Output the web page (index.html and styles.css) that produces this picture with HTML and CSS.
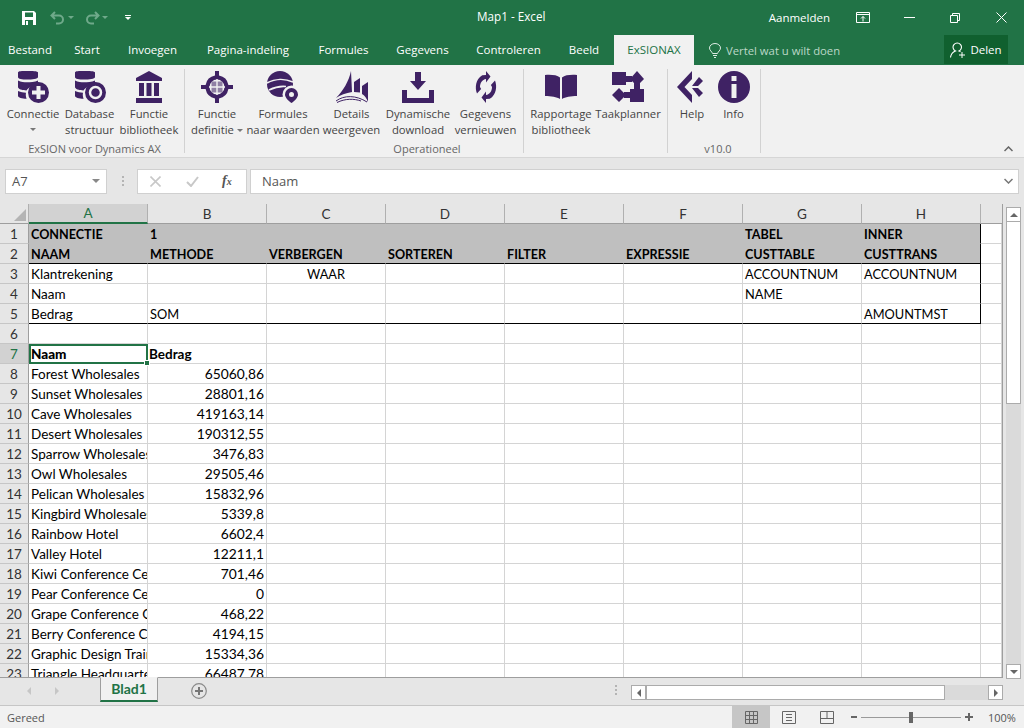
FILE: index.html
```html
<!DOCTYPE html>
<html lang="nl">
  <head>
    <meta charset="UTF-8" />
    <title>Map1 - Excel</title>
    <link rel="stylesheet" href="styles.css">
  </head>

  <body>
    <div class="app">
      <div class="titlebar">
        <div class="qat">
          <svg class="qat-save" width="14" height="14" viewBox="0 0 14 14"><path fill="#fff" d="M0 0h12l2 2v12H0z"/><path fill="#217346" d="M3 1.500h8v4.500H3zM3 9h8v5H3z"/><path fill="#fff" d="M4 10h2v4H4z"/></svg>
          <svg class="qat-off" width="16" height="14" viewBox="0 0 16 14"><path fill="none" stroke="#6fa98a" stroke-width="2" d="M5 1L1.500 4.500 5 8M2 4.500h7a4 4 0 0 1 0 8H6"/></svg>
          <span class="caret caret-off"></span>
          <svg class="qat-off qat-redo" width="16" height="14" viewBox="0 0 16 14"><path fill="none" stroke="#6fa98a" stroke-width="2" d="M11 1l3.500 3.500L11 8M14 4.500H7a4 4 0 0 0 0 8h3"/></svg>
          <span class="caret caret-off"></span>
          <span class="qat-more"><i></i><span class="caret"></span></span>
        </div>
        <div class="doc-title">Map1 - Excel</div>
        <div class="winctl">
          <span class="signin">Aanmelden</span>
          <svg class="win-display" width="14" height="11" viewBox="0 0 14 11"><path fill="none" stroke="#fff" d="M.5.500h13v10H.5zM.5 2.500h13M7 9.500V4.500M5 6.500l2-2 2 2"/></svg>
          <svg class="win-min" width="11" height="1" viewBox="0 0 11 1"><path fill="#fff" d="M0 0h11v1H0z"/></svg>
          <svg class="win-restore" width="10" height="10" viewBox="0 0 10 10"><path fill="none" stroke="#fff" d="M.5 2.500h7v7h-7zM2.500 2.500v-2h7v7h-2"/></svg>
          <svg class="win-close" width="11" height="11" viewBox="0 0 11 11"><path fill="none" stroke="#fff" d="M.5.500l10 10M10.500.500l-10 10"/></svg>
        </div>
      </div>

      <div class="tabs">
        <a class="tab t-bestand">Bestand</a>
        <a class="tab t-start">Start</a>
        <a class="tab t-invoegen">Invoegen</a>
        <a class="tab t-pagina">Pagina-indeling</a>
        <a class="tab t-formules">Formules</a>
        <a class="tab t-gegevens">Gegevens</a>
        <a class="tab t-controleren">Controleren</a>
        <a class="tab t-beeld">Beeld</a>
        <a class="tab tab-active">ExSIONAX</a>
        <div class="tell">
          <svg width="12" height="15" viewBox="0 0 12 15"><path fill="none" stroke="#dcebe3" d="M3.500 10.500C3 8.500.5 7.500.5 5a5.500 4.500 0 0 1 11 0c0 2.500-2.500 3.500-3 5.500zM4 12.500h4M5 14.500h2"/></svg>
          <span>Vertel wat u wilt doen</span>
        </div>
        <div class="share">
          <svg width="16" height="16" viewBox="0 0 16 16"><path fill="none" stroke="#fff" stroke-width="1.100" d="M.5 15.500c.5-4 2.500-5.500 5-6.500a4.200 4.200 0 1 1 3.500 0c.5.200 1 .4 1.500.8"/><path fill="none" stroke="#fff" d="M12 10v6M9 13h6"/></svg>
          <span>Delen</span>
        </div>
      </div>

      <div class="ribbon">
        <div class="group group-conn">
          <div class="buttons">
            <div class="rbtn">
              <svg class="ico" viewBox="0 0 32 32"><path d="M1 1.500C1 0 5 0 10 0s11 0 11 1.500V6C21 8 15 8.500 10 8.500S1 8 1 6zM1 9.500c3 1.500 6 1.800 9 1.800s8-.3 11-1.800v3.200c-5 1-10 4-11.500 6.800C5 19.300 1 18 1 16zM1 20c3 1.200 5 1.600 8 1.700-.4 2-.2 4 .6 6-4.600 0-8.600-1-8.600-3z"/><circle cx="21.500" cy="21.500" r="10.500"/><path fill="#f1f1f1" d="M19.500 15h4v4.500H28v4h-4.500V28h-4v-4.500H15v-4h4.500z"/></svg>
              <span>Connectie</span>
              <span class="caret caret-dark caret-block"></span>
            </div>
            <div class="rbtn">
              <svg class="ico" viewBox="0 0 32 32"><path d="M1 1.500C1 0 5 0 10 0s11 0 11 1.500V6C21 8 15 8.500 10 8.500S1 8 1 6zM1 9.500c3 1.500 6 1.800 9 1.800s8-.3 11-1.800v3.200c-5 1-10 4-11.500 6.800C5 19.300 1 18 1 16zM1 20c3 1.200 5 1.600 8 1.700-.4 2-.2 4 .6 6-4.600 0-8.600-1-8.600-3z"/><circle cx="21.500" cy="21.500" r="10.500"/><circle cx="21.500" cy="21.500" r="5.500" fill="none" stroke="#f1f1f1" stroke-width="2.500"/></svg>
              <span>Database<br>structuur</span>
            </div>
            <div class="rbtn">
              <svg class="ico" viewBox="0 0 32 32"><path d="M16 0l13 7v3H3V7zM3 27h26v5H3zM6 12h5v13H6zM13.500 12h5v13h-5zM21 12h5v13h-5z"/></svg>
              <span>Functie<br>bibliotheek</span>
            </div>
          </div>
          <div class="glabel">ExSION voor Dynamics AX</div>
        </div>

        <div class="group group-oper">
          <div class="buttons">
            <div class="rbtn">
              <svg class="ico" viewBox="0 0 32 32"><path fill-rule="evenodd" d="M14 0h4v4.600A11.800 11.800 0 0 1 27.400 14H32v4h-4.600A11.800 11.800 0 0 1 18 27.400V32h-4v-4.600A11.800 11.800 0 0 1 4.600 18H0v-4h4.600A11.800 11.800 0 0 1 14 4.600zM16 8.500a7.500 7.500 0 1 0 0 15 7.500 7.500 0 0 0 0-15z"/><path opacity=".55" d="M10.500 10.500h11v11h-11z"/><path fill="#f1f1f1" d="M15.300 8h1.400v16h-1.400zM8 15.300h16v1.400H8z"/></svg>
              <span>Functie<br>definitie<i class="caret caret-dark caret-inline"></i></span>
            </div>
            <div class="rbtn">
              <svg class="ico" viewBox="0 0 32 32"><circle cx="13" cy="13" r="13"/><path fill="none" stroke="#f1f1f1" stroke-width="1.600" d="M0 12C8 7.500 18 7.500 26 11M2 19c6-3 12-4 17-3.500"/><circle cx="24.500" cy="23.500" r="9" fill="#f1f1f1"/><path fill-rule="evenodd" d="M24.500 17a6.500 6.500 0 0 1 6.500 6.500c0 3-3.500 6.500-6.500 8.500-3-2-6.500-5.500-6.500-8.500a6.500 6.500 0 0 1 6.500-6.500zm0 4a2.500 2.500 0 1 0 0 5 2.500 2.500 0 0 0 0-5z"/></svg>
              <span>Formules<br>naar waarden</span>
            </div>
            <div class="rbtn">
              <svg class="ico" viewBox="0 0 32 32"><path d="M15 0l1 21C10 22 4 24 0 27 7 20 13 10 15 0zM18 11l6-4v14.500l-6-.6zM26 15l6-4v20c-1.500-4-3.500-6.500-6-8z"/><path fill="none" stroke="#3f2264" d="M0 30c8-6 20-6 31 1M1 31.500c8-4 17-4 24-1.500"/></svg>
              <span>Details<br>weergeven</span>
            </div>
            <div class="rbtn">
              <svg class="ico" viewBox="0 0 32 32"><path d="M13 1h6v9h5l-8 9-8-9h5zM0 19h5v8h22v-8h5v13H0z"/></svg>
              <span>Dynamische<br>download</span>
            </div>
            <div class="rbtn">
              <svg class="ico" viewBox="0 0 32 32"><g transform="translate(4 0) scale(.75 1)"><path d="M16 0l6 5.500-6 6V8C11 8.500 8 12 8 16l1.500 2L4 22.500C1 17 2 8 11 4.200L16 4zM16 32l-6-5.500 6-6V24c5-.5 8-4 8-8l-1.500-2L28 9.500C31 15 30 24 21 27.800L16 28z"/></g></svg>
              <span>Gegevens<br>vernieuwen</span>
            </div>
            <div class="sep"></div>
            <div class="rbtn">
              <svg class="ico" viewBox="0 0 32 32"><path d="M0 4c6-.5 12 0 15 2.500V28C12 26 6 25 0 25zM32 4c-6-.5-12 0-15 2.500V28c3-2 9-3 15-3z"/></svg>
              <span>Rapportage<br>bibliotheek</span>
            </div>
            <div class="rbtn">
              <svg class="ico" viewBox="0 0 32 32"><path d="M0 1h14v13H0zM14 5h6v6h-6zM25 0l7 8-7 7-7-7zM18 18h14v13H18zM22 12h6v8h-6zM7 17l7 7-7 7-7-7zM12 21h8v6h-8z"/></svg>
              <span>Taakplanner</span>
            </div>
          </div>
          <div class="glabel">Operationeel</div>
        </div>

        <div class="group group-info">
          <div class="buttons">
            <div class="rbtn">
              <svg class="ico" viewBox="0 0 32 32"><path d="M16 0v8L8.500 16l7.500 8v8L1 16zM23 6l4 4-5 5h-6zM16 17h6l5 5-4 4z"/></svg>
              <span>Help</span>
            </div>
            <div class="rbtn">
              <svg class="ico" viewBox="0 0 32 32"><path fill-rule="evenodd" d="M16 0a16 16 0 1 1 0 32 16 16 0 0 1 0-32zM13.500 5v5h5V5zm0 8v14h5V13z"/></svg>
              <span>Info</span>
            </div>
          </div>
          <div class="glabel">v10.0</div>
        </div>

        <svg class="collapse" width="9" height="6" viewBox="0 0 9 6"><path fill="none" stroke="#666" stroke-width="1.500" d="M.5 5l4-4 4 4"/></svg>
      </div>

      <div class="fbar">
        <div class="namebox"><span>A7</span><span class="caret caret-grey"></span></div>
        <div class="dots"><i></i><i></i><i></i></div>
        <div class="fbtns">
          <svg width="11" height="11" viewBox="0 0 11 11"><path fill="none" stroke="#c8c8c8" stroke-width="1.600" d="M.5.500l10 10M10.500.500l-10 10"/></svg>
          <svg class="fcheck" width="13" height="11" viewBox="0 0 13 11"><path fill="none" stroke="#c8c8c8" stroke-width="2" d="M1 6l4 4 7-9"/></svg>
          <span class="fx">f<small>x</small></span>
        </div>
        <div class="finput">
          <span>Naam</span>
          <svg width="9" height="6" viewBox="0 0 9 6"><path fill="none" stroke="#777" stroke-width="1.500" d="M.5 1l4 4 4-4"/></svg>
        </div>
      </div>

      <div class="sheetarea">
        <div class="gridwrap">
          <table class="sheet">
            <colgroup>
              <col class="c-head"><col class="c-col"><col class="c-col"><col class="c-col"><col class="c-col"><col class="c-col"><col class="c-col"><col class="c-col"><col class="c-col"><col>
            </colgroup>
            <thead>
              <tr>
                <th class="corner"><span class="corner-tri"></span></th>
                <th class="on">A</th><th>B</th><th>C</th><th>D</th><th>E</th><th>F</th><th>G</th><th>H</th><th class="blank"></th>
              </tr>
            </thead>
            <tbody>
              <tr class="hd"><th>1</th><td>CONNECTIE</td><td>1</td><td></td><td></td><td></td><td></td><td>TABEL</td><td class="edge">INNER</td><td class="plain"></td></tr>
              <tr class="hd hd-last"><th>2</th><td>NAAM</td><td>METHODE</td><td>VERBERGEN</td><td>SORTEREN</td><td>FILTER</td><td>EXPRESSIE</td><td>CUSTTABLE</td><td class="edge">CUSTTRANS</td><td class="plain"></td></tr>
              <tr><th>3</th><td>Klantrekening</td><td></td><td class="mid caps">WAAR</td><td></td><td></td><td></td><td class="caps">ACCOUNTNUM</td><td class="edge caps">ACCOUNTNUM</td><td></td></tr>
              <tr><th>4</th><td>Naam</td><td></td><td></td><td></td><td></td><td></td><td class="caps">NAME</td><td class="edge"></td><td></td></tr>
              <tr class="box-end"><th>5</th><td>Bedrag</td><td class="caps">SOM</td><td></td><td></td><td></td><td></td><td></td><td class="edge caps">AMOUNTMST</td><td></td></tr>
              <tr><th>6</th><td></td><td></td><td></td><td></td><td></td><td></td><td></td><td></td><td></td></tr>
              <tr class="strong"><th class="on-row">7</th><td class="selected"><b>Naam</b><i class="handle"></i></td><td class="tight">Bedrag</td><td></td><td></td><td></td><td></td><td></td><td></td><td></td></tr>
              <tr><th>8</th><td>Forest Wholesales</td><td class="num">65060,86</td><td></td><td></td><td></td><td></td><td></td><td></td><td></td></tr>
              <tr><th>9</th><td>Sunset Wholesales</td><td class="num">28801,16</td><td></td><td></td><td></td><td></td><td></td><td></td><td></td></tr>
              <tr><th>10</th><td>Cave Wholesales</td><td class="num">419163,14</td><td></td><td></td><td></td><td></td><td></td><td></td><td></td></tr>
              <tr><th>11</th><td>Desert Wholesales</td><td class="num">190312,55</td><td></td><td></td><td></td><td></td><td></td><td></td><td></td></tr>
              <tr><th>12</th><td>Sparrow Wholesales</td><td class="num">3476,83</td><td></td><td></td><td></td><td></td><td></td><td></td><td></td></tr>
              <tr><th>13</th><td>Owl Wholesales</td><td class="num">29505,46</td><td></td><td></td><td></td><td></td><td></td><td></td><td></td></tr>
              <tr><th>14</th><td>Pelican Wholesales</td><td class="num">15832,96</td><td></td><td></td><td></td><td></td><td></td><td></td><td></td></tr>
              <tr><th>15</th><td>Kingbird Wholesales</td><td class="num">5339,8</td><td></td><td></td><td></td><td></td><td></td><td></td><td></td></tr>
              <tr><th>16</th><td>Rainbow Hotel</td><td class="num">6602,4</td><td></td><td></td><td></td><td></td><td></td><td></td><td></td></tr>
              <tr><th>17</th><td>Valley Hotel</td><td class="num">12211,1</td><td></td><td></td><td></td><td></td><td></td><td></td><td></td></tr>
              <tr><th>18</th><td>Kiwi Conference Center</td><td class="num">701,46</td><td></td><td></td><td></td><td></td><td></td><td></td><td></td></tr>
              <tr><th>19</th><td>Pear Conference Center</td><td class="num">0</td><td></td><td></td><td></td><td></td><td></td><td></td><td></td></tr>
              <tr><th>20</th><td>Grape Conference Center</td><td class="num">468,22</td><td></td><td></td><td></td><td></td><td></td><td></td><td></td></tr>
              <tr><th>21</th><td>Berry Conference Center</td><td class="num">4194,15</td><td></td><td></td><td></td><td></td><td></td><td></td><td></td></tr>
              <tr><th>22</th><td>Graphic Design Training</td><td class="num">15334,36</td><td></td><td></td><td></td><td></td><td></td><td></td><td></td></tr>
              <tr><th>23</th><td>Triangle Headquarters</td><td class="num">66487,78</td><td></td><td></td><td></td><td></td><td></td><td></td><td></td></tr>
            </tbody>
          </table>
        </div>
        <div class="vscroll">
          <div class="sbtn"><span class="tri tri-up"></span></div>
          <div class="vthumb"></div>
          <div class="sbtn sbtn-down"><span class="tri tri-down"></span></div>
        </div>
      </div>

      <div class="sheetbar">
        <div class="tabnav"><span class="tri tri-left tri-pale"></span><span class="tri tri-right tri-pale"></span></div>
        <div class="sheettab">Blad1</div>
        <svg class="addsheet" width="16" height="16" viewBox="0 0 16 16"><circle cx="8" cy="8" r="7.300" fill="none" stroke="#8a8a8a" stroke-width="1.200"/><path stroke="#777" stroke-width="2" d="M8 4v8M4 8h8"/></svg>
        <div class="dots dots-bar"><i></i><i></i><i></i></div>
        <div class="hscroll">
          <div class="hbtn"><span class="tri tri-left"></span></div>
          <div class="hthumb"></div>
          <div class="hbtn hbtn-right"><span class="tri tri-right"></span></div>
        </div>
      </div>

      <div class="statusbar">
        <span class="ready">Gereed</span>
        <div class="views">
          <div class="view view-on"><svg width="13" height="13" viewBox="0 0 13 13"><path fill="none" stroke="#666" d="M.5.500h12v12H.5zM4.500.500v12M8.500.500v12M.5 4.500h12M.5 8.500h12"/></svg></div>
          <div class="view"><svg width="14" height="13" viewBox="0 0 14 13"><path fill="none" stroke="#666" d="M.5.500h13v12H.5zM4 3.500h6M4 6.500h6M4 9.500h6"/></svg></div>
          <div class="view"><svg width="14" height="13" viewBox="0 0 14 13"><path fill="none" stroke="#666" d="M.5 12.500V.5h13v12zM.5 7.500h13M7 .5v7"/></svg></div>
        </div>
        <div class="zoom">
          <span class="zoom-minus"></span>
          <div class="zoom-track"><span class="zoom-knob"></span></div>
          <span class="zoom-plus"></span>
          <span class="zoom-val">100%</span>
        </div>
      </div>
    </div>
  </body>
</html>
```

FILE: styles.css
```css
* {
  padding: 0;
  margin: 0;
  box-sizing: border-box;
}

html,
body {
  width: 100%;
  height: 100%;
  overflow: hidden;
}

body {
  font-family: "Open Sans", "Noto Sans", sans-serif;
  font-size: 11.5px;
  color: #444;
}

.app {
  display: flex;
  flex-direction: column;
  width: 1024px;
  height: 728px;
  background-color: #e6e6e6;
}

/* shared little triangles */
.caret {
  display: inline-block;
  width: 0;
  height: 0;
  border-left: 3px solid transparent;
  border-right: 3px solid transparent;
  border-top: 3px solid #fff;
}

.caret-off {
  border-top-color: #6fa98a;
  margin-left: 2px;
}

.caret-dark {
  border-top-color: #777;
}

.caret-grey {
  border-left-width: 4px;
  border-right-width: 4px;
  border-top: 4px solid #888;
}

.caret-block {
  display: block;
  margin: 6px auto 0;
}

.caret-inline {
  margin-left: 3px;
  vertical-align: 2px;
}

.tri {
  display: block;
  width: 0;
  height: 0;
}

.tri-up {
  border-left: 4px solid transparent;
  border-right: 4px solid transparent;
  border-bottom: 4px solid #666;
}

.tri-down {
  border-left: 4px solid transparent;
  border-right: 4px solid transparent;
  border-top: 4px solid #666;
}

.tri-left {
  border-top: 4px solid transparent;
  border-bottom: 4px solid transparent;
  border-right: 4px solid #666;
}

.tri-right {
  border-top: 4px solid transparent;
  border-bottom: 4px solid transparent;
  border-left: 4px solid #666;
}

.tri-pale {
  border-left-color: #c6c6c6;
  border-right-color: #c6c6c6;
}

/* title bar */
.titlebar {
  position: relative;
  display: flex;
  justify-content: space-between;
  align-items: center;
  height: 35px;
  background-color: #217346;
  color: #fff;
}

.qat {
  display: flex;
  align-items: center;
  padding: 0 0 0 22px;
}

.qat-off {
  margin-left: 14px;
}

.qat-redo {
  margin-left: 10px;
}

.qat-more {
  display: flex;
  flex-direction: column;
  align-items: center;
  margin-left: 17px;
  gap: 1px;
}

.qat-more i {
  display: block;
  width: 6px;
  height: 1px;
  background-color: #fff;
}

.doc-title {
  position: absolute;
  left: 477px;
  top: 8px;
  font-size: 11.7px;
  color: #fff;
}

.winctl {
  display: flex;
  align-items: center;
  padding-right: 17px;
}

.signin {
  font-size: 11.5px;
  margin-right: 26px;
}

.win-min {
  margin-left: 34px;
}

.win-restore {
  margin-left: 35px;
}

.win-close {
  margin-left: 36px;
}

/* tab strip */
.tabs {
  display: flex;
  align-items: stretch;
  height: 30px;
  background-color: #217346;
  color: #fff;
  font-size: 11.5px;
}

.tab {
  display: block;
  padding-top: 7px;
  text-align: center;
}

.t-bestand { width: 60px; }
.t-start { width: 54px; }
.t-invoegen { width: 77px; }
.t-pagina { width: 114px; }
.t-formules { width: 77px; }
.t-gegevens { width: 81px; }
.t-controleren { width: 91px; }
.t-beeld { width: 60px; }

.tab-active {
  width: 80px;
  background-color: #f1f1f1;
  color: #217346;
}

.tell {
  display: flex;
  align-items: center;
  gap: 5px;
  margin-left: 15px;
  color: #bcd8c8;
  font-size: 11.3px;
  width: 235px;
}

.share {
  display: flex;
  align-items: center;
  justify-content: center;
  gap: 4px;
  width: 64px;
  height: 29px;
  background-color: #10602f;
}

/* ribbon */
.ribbon {
  position: relative;
  display: flex;
  height: 93px;
  background-color: #f1f1f1;
  border-bottom: 1px solid #d6d6d6;
  font-size: 11.3px;
  line-height: 16px;
  color: #444;
}

.group {
  position: relative;
  display: flex;
  flex-direction: column;
  height: 84px;
  margin-top: 4px;
  border-right: 1px solid #d2d2d2;
}

.group-conn { width: 185px; padding-left: 5px; }
.group-oper { width: 483px; padding-left: 2px; }
.group-info { width: 93px; padding-left: 8px; }

.buttons {
  display: flex;
  flex: none;
  height: 72px;
}

.group-conn .rbtn:nth-child(1) { width: 56px; }
.group-conn .rbtn:nth-child(2) { width: 57px; }
.group-conn .rbtn:nth-child(3) { width: 62px; }

.group-oper .rbtn:nth-child(1) { width: 60px; }
.group-oper .rbtn:nth-child(2) { width: 72px; }
.group-oper .rbtn:nth-child(3) { width: 65px; }
.group-oper .rbtn:nth-child(4) { width: 68px; }
.group-oper .rbtn:nth-child(5) { width: 67px; }
.group-oper .rbtn:nth-child(7) { width: 68px; }
.group-oper .rbtn:nth-child(8) { width: 66px; }

.group-info .rbtn:nth-child(1) { width: 32px; }
.group-info .rbtn:nth-child(2) { width: 35px; margin-left: 8px; }

.rbtn {
  display: flex;
  flex-direction: column;
  align-items: center;
  text-align: center;
  white-space: nowrap;
  padding-top: 2px;
}

.rbtn > span {
  display: block;
}

.ico {
  display: block;
  width: 32px;
  height: 32px;
  margin-bottom: 3px;
  fill: #3f2264;
  flex: none;
}

.sep {
  width: 1px;
  height: 84px;
  margin: 0 3px 0 4px;
  background-color: #d2d2d2;
}

.glabel {
  height: 16px;
  line-height: 16px;
  text-align: center;
  color: #666;
  font-size: 11px;
}

.collapse {
  position: absolute;
  right: 11px;
  bottom: 5px;
}

/* formula bar */
.fbar {
  display: flex;
  align-items: center;
  height: 46px;
  padding: 0 5px 0 5px;
  font-size: 13px;
  color: #555;
}

.namebox {
  display: flex;
  justify-content: space-between;
  align-items: center;
  width: 102px;
  height: 25px;
  padding: 0 6px;
  background-color: #fff;
  border: 1px solid #d0d0d0;
}

.dots {
  display: flex;
  flex-direction: column;
  gap: 2px;
  margin: 0 13px 0 15px;
}

.dots i {
  display: block;
  width: 2px;
  height: 2px;
  background-color: #b4b4b4;
}

.fbtns {
  display: flex;
  align-items: center;
  width: 110px;
  height: 25px;
  padding-left: 12px;
  background-color: #fff;
  border: 1px solid #d0d0d0;
}

.fcheck {
  margin-left: 25px;
}

.fx {
  margin-left: 23px;
  font-family: "Liberation Serif", serif;
  font-style: italic;
  font-weight: bold;
  font-size: 14px;
  color: #555;
}

.fx small {
  font-size: 10px;
}

.finput {
  display: flex;
  justify-content: space-between;
  align-items: center;
  flex: 1;
  height: 25px;
  margin-left: 3px;
  padding: 0 5px 0 11px;
  background-color: #fff;
  border: 1px solid #d0d0d0;
}

/* sheet */
.sheetarea {
  display: flex;
  height: 474px;
  flex: none;
}

.gridwrap {
  width: 1003px;
  height: 100%;
  overflow: hidden;
  border-bottom: 1px solid #9e9e9e;
  border-right: 1px solid #9e9e9e;
  background-color: #fff;
}

.sheet {
  table-layout: fixed;
  width: 1002px;
  border-collapse: separate;
  border-spacing: 0;
  font-family: Lato, "Liberation Sans", sans-serif;
  font-size: 13.5px;
  color: #000;
}

.c-head { width: 29px; }
.c-col { width: 119px; }

.sheet thead th {
  height: 20px;
  font-weight: normal;
  font-size: 13.5px;
  background-color: #e6e6e6;
  border-right: 1px solid #b0b0b0;
  border-bottom: 1px solid #9e9e9e;
  color: #333;
}

.sheet thead th.on {
  background-color: #d2d2d2;
  color: #217346;
  border-bottom: 2px solid #217346;
}

.sheet thead th.blank {
  background-color: #e6e6e6;
  border-right: 0;
}

.corner {
  position: relative;
}

.corner-tri {
  position: absolute;
  right: 2px;
  bottom: 2px;
  width: 0;
  height: 0;
  border-left: 12px solid transparent;
  border-bottom: 12px solid #b4b4b4;
}

.sheet tbody th {
  height: 20px;
  font-weight: normal;
  font-size: 13.5px;
  background-color: #e6e6e6;
  border-right: 1px solid #9e9e9e;
  border-bottom: 1px solid #c6c6c6;
  color: #333;
}

.sheet tbody th.on-row {
  background-color: #d2d2d2;
  color: #217346;
}

.sheet td {
  height: 20px;
  padding: 0 2px 0 2px;
  overflow: hidden;
  white-space: nowrap;
  border-right: 1px solid #d4d4d4;
  border-bottom: 1px solid #d4d4d4;
}

.sheet .caps {
  font-size: 12.8px;
}

.sheet .num {
  font-size: 13.8px;
}

.hd td {
  background-color: #bfbfbf;
  font-weight: bold;
  font-size: 12.6px;
  border-right-color: #bfbfbf;
  border-bottom-color: #bfbfbf;
}

.sheet .hd td {
  padding-top: 2px;
}

.hd-last td,
.box-end td {
  border-bottom-color: #000;
}

.hd td.plain {
  background-color: #fff;
  border-right-color: #d4d4d4;
  border-bottom-color: #d4d4d4;
}

.box-end td:last-child {
  border-bottom-color: #d4d4d4;
}

.sheet td.edge {
  border-right-color: #000;
}

.sheet .hd td.edge {
  border-right-color: #000;
}

.mid {
  text-align: center;
}

.num {
  text-align: right;
}

.strong td {
  font-weight: bold;
}

.sheet td.tight {
  padding-left: 1px;
}

.sheet td.selected {
  position: relative;
  overflow: visible;
  outline: 2px solid #217346;
  outline-offset: -2px;
}

.handle {
  position: absolute;
  right: -3px;
  bottom: -3px;
  width: 6px;
  height: 6px;
  background-color: #217346;
  border: 1px solid #fff;
}

/* scrollbars */
.vscroll {
  display: flex;
  flex-direction: column;
  align-items: center;
  width: 15px;
  height: 472px;
  margin: 3px 0 0 3px;
  background-color: #dadada;
}

.sbtn {
  display: flex;
  align-items: center;
  justify-content: center;
  flex: none;
  width: 15px;
  height: 15px;
  background-color: #fff;
  border: 1px solid #ababab;
}

.sbtn-down {
  margin-top: auto;
}

.vthumb {
  flex: none;
  width: 15px;
  height: 182px;
  background-color: #fff;
  border: 1px solid #ababab;
  border-top: 0;
}

.sheetbar {
  display: flex;
  align-items: flex-start;
  flex: none;
  height: 28px;
  border-bottom: 1px solid #c6c6c6;
}

.tabnav {
  display: flex;
  align-items: center;
  gap: 24px;
  width: 100px;
  height: 26px;
  padding-left: 27px;
}

.sheettab {
  width: 58px;
  height: 25px;
  margin-top: -1px;
  text-align: center;
  background-color: #f1f1f1;
  border: 1px solid #9e9e9e;
  border-top-color: #f1f1f1;
  border-bottom: 2px solid #217346;
  font-family: Lato, sans-serif;
  font-weight: bold;
  font-size: 14px;
  line-height: 22px;
  color: #217346;
}

.addsheet {
  margin: 5px 0 0 33px;
}

.sheetbar .dots-bar {
  margin: 7px 14px 0 auto;
}

.hscroll {
  display: flex;
  flex: none;
  height: 15px;
  width: 372px;
  margin: 7px 21px 0 0;
  background-color: #dadada;
}

.hbtn {
  display: flex;
  align-items: center;
  justify-content: center;
  width: 15px;
  height: 15px;
  background-color: #fff;
  border: 1px solid #ababab;
}

.hbtn-right {
  margin-left: auto;
}

.hthumb {
  width: 299px;
  height: 15px;
  background-color: #fff;
  border: 1px solid #ababab;
}

/* status bar */
.statusbar {
  display: flex;
  align-items: center;
  flex: 1;
  background-color: #f1f1f1;
  color: #555;
  font-size: 11px;
}

.ready {
  width: 732px;
  padding-left: 7px;
}

.views {
  display: flex;
  height: 100%;
}

.view {
  display: flex;
  align-items: center;
  justify-content: center;
  width: 38px;
  height: 100%;
}

.view-on {
  background-color: #c6c6c6;
}

.zoom {
  display: flex;
  align-items: center;
  margin-left: 5px;
}

.zoom-minus {
  display: block;
  width: 6px;
  height: 2px;
  margin-right: 4px;
  background-color: #666;
}

.zoom-track {
  position: relative;
  width: 100px;
  height: 1px;
  background-color: #9a9a9a;
}

.zoom-knob {
  position: absolute;
  left: 48px;
  top: -5px;
  width: 4px;
  height: 11px;
  background-color: #666;
}

.zoom-plus {
  position: relative;
  display: block;
  width: 8px;
  height: 2px;
  margin-left: 4px;
  background-color: #666;
}

.zoom-plus::after {
  content: "";
  position: absolute;
  left: 3px;
  top: -3px;
  width: 2px;
  height: 8px;
  background-color: #666;
}

.zoom-val {
  margin-left: 15px;
}
```
